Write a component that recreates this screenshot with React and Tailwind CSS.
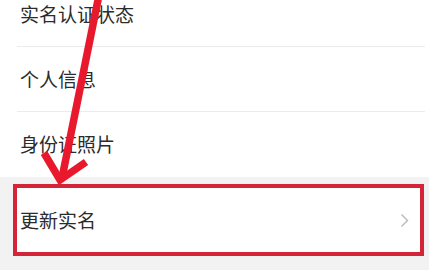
import React from 'react';

// Settings rows shown above the highlighted action
const ROWS = ['实名认证状态', '个人信息', '身份证照片'];

const FONT = { fontFamily: '"Noto Sans CJK SC", "Noto Sans", sans-serif' };

const App = () => {
  return (
    <div className="relative w-[429px] h-[270px] overflow-hidden bg-white" style={FONT}>
      <div className="-mt-[18px]">
        {ROWS.map((label, i) => (
          <div key={label} className="pl-[17px]">
            <div
              className={`flex items-center h-[65px] pl-[3px] text-[19px] text-[#2b2b2b] ${
                i < ROWS.length - 1 ? 'border-b border-[#ececec] mr-[4px]' : ''
              }`}
            >
              {label}
            </div>
          </div>
        ))}
      </div>

      {/* Highlighted row */}
      <div className="bg-[#f2f2f2] pt-[7px] pl-[13px] pr-[5px] h-[100px]">
        <div className="border-[4px] border-[#d42437] bg-white h-[72px] flex items-center justify-between pl-[3px] pr-[11px]">
          <span className="text-[19px] text-[#2b2b2b]">更新实名</span>
          <svg width="9" height="15" viewBox="0 0 9 15" fill="none">
            <path d="M1.5 1.5 L7.5 7.5 L1.5 13.5" stroke="#b8b8b8" strokeWidth="1.4" />
          </svg>
        </div>
      </div>

      {/* Annotation arrow */}
      <svg className="absolute inset-0 pointer-events-none" width="429" height="270" viewBox="0 0 429 270">
        <line x1="99" y1="-5" x2="62" y2="178" stroke="#e8192c" strokeWidth="7.5" />
        <polyline
          points="44,153 60,180 86,162"
          fill="none"
          stroke="#e8192c"
          strokeWidth="7.5"
          strokeLinejoin="miter"
        />
      </svg>
    </div>
  );
};

export default App;
